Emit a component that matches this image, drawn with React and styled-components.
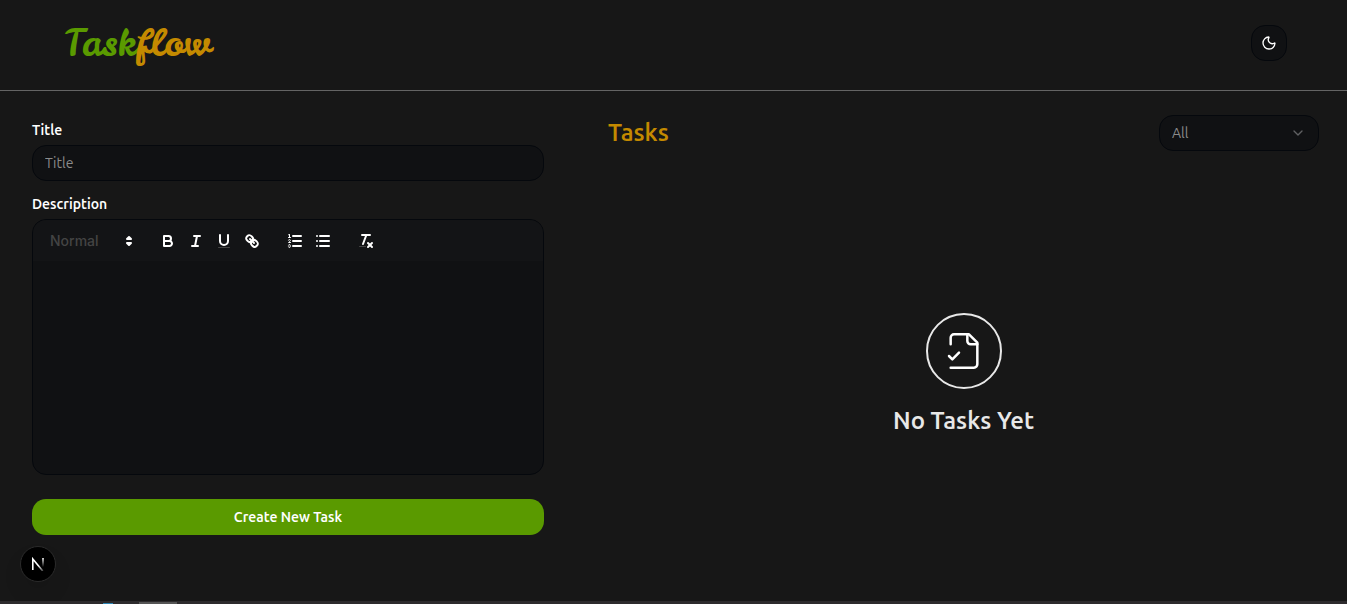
import React, { useState } from "react";
import styled, { createGlobalStyle, css } from "styled-components";
import { ChevronDown, Moon } from "lucide-react";

const uiFont = `"Ubuntu Sans", Ubuntu, "Noto Sans", sans-serif`;

const weight = {
  body: 450,
  strong: 560,
};

const GlobalStyle = createGlobalStyle`
  *, *::before, *::after { box-sizing: border-box; }
  body {
    margin: 0;
    background: #171717;
    color: #fff;
    font-family: ${uiFont};
    font-size: 14px;
    font-weight: ${weight.body};
    line-height: 20px;
  }
  button, input, select { font: inherit; color: inherit; }
`;

const Page = styled.div`
  display: flex;
  flex-direction: column;
  min-height: 100vh;
`;

const Header = styled.header`
  display: flex;
  align-items: center;
  justify-content: space-between;
  padding: 20px 60px 24px 64px;
  border-bottom: 1px solid #646464;
`;

const Logo = styled.a`
  font-family: "Leckerli One", Pacifico, "Liberation Serif", cursive;
  font-size: 36px;
  font-weight: 400;
  line-height: 46px;
  color: #5a9a00;
  text-decoration: none;
`;

const LogoAccent = styled.span`
  color: #c48a00;
`;

const surface = css`
  background: #101113;
  border: 1px solid #05080d;
  border-radius: 14px;
`;

const ThemeButton = styled.button`
  ${surface}
  display: grid;
  place-items: center;
  width: 36px;
  height: 36px;
  padding: 0;
`;

const Main = styled.main`
  flex: 1;
  display: grid;
  grid-template-columns: minmax(320px, 576px) minmax(0, 1fr);
`;

const TaskForm = styled.form`
  display: flex;
  flex-direction: column;
  padding: 32px;
`;

const Field = styled.div`
  display: flex;
  flex-direction: column;
  gap: 6px;
  margin-bottom: 16px;
`;

const Label = styled.label`
  font-weight: ${weight.strong};
  line-height: 16px;
`;

const TextInput = styled.input`
  ${surface}
  width: 100%;
  height: 36px;
  padding: 0 12px;
  &::placeholder { color: #8b8b8b; opacity: 1; }
`;

const Editor = styled.div`
  ${surface}
  overflow: hidden;
`;

const Toolbar = styled.div`
  display: flex;
  align-items: center;
  gap: 15px;
  padding: 8px;
  background: #131416;
  height: 41px;
`;

const ToolGroup = styled.div`
  display: flex;
  align-items: center;
`;

const FormatPicker = styled.div`
  position: relative;
  width: 98px;
`;

const FormatSelect = styled.select`
  appearance: none;
  width: 100%;
  height: 24px;
  padding: 0 8px 0 9px;
  border: 0;
  background: transparent;
  color: #444;
  font-family: Inter, "Liberation Sans", sans-serif;
  font-weight: 500;
`;

const PickerArrows = styled.svg`
  position: absolute;
  top: 3px;
  right: 1px;
  width: 18px;
  height: 18px;
  pointer-events: none;
`;

const ToolButton = styled.button`
  width: 28px;
  height: 24px;
  padding: 3px 5px;
  border: 0;
  background: none;
`;

const ToolIcon = styled.svg`
  display: block;
  width: 18px;
  height: 18px;
  fill: none;
  stroke: #fff;
  stroke-width: 2;
  stroke-linecap: round;
  stroke-linejoin: round;
  .solid { fill: #fff; stroke: none; }
  .thin { stroke-width: 1; }
  .rule { fill: #444; stroke: none; }
`;

const EditorBody = styled.div`
  min-height: 213px;
  outline: none;
`;

const SubmitButton = styled.button`
  height: 36px;
  margin-top: 8px;
  padding: 2px 16px 0;
  border: 0;
  border-radius: 14px;
  background: #5a9a00;
  font-weight: ${weight.strong};
`;

const TaskPanel = styled.section`
  display: flex;
  flex-direction: column;
  padding: 24px 28px 24px 32px;
`;

const PanelHeader = styled.div`
  display: flex;
  align-items: center;
  justify-content: space-between;
`;

const PanelTitle = styled.h1`
  margin: 0;
  font-size: 24px;
  line-height: 32px;
  font-weight: ${weight.strong};
  color: #c48a00;
`;

const FilterBox = styled.div`
  position: relative;
  width: 160px;
`;

const FilterSelect = styled.select`
  ${surface}
  appearance: none;
  width: 100%;
  height: 36px;
  padding: 2px 32px 0 12px;
  color: #8b8b8b;
`;

const FilterChevron = styled(ChevronDown)`
  position: absolute;
  top: 10px;
  right: 13px;
  color: #606163;
  pointer-events: none;
`;

const EmptyState = styled.div`
  display: flex;
  flex-direction: column;
  align-items: center;
  gap: 16px;
  padding-top: 162px;
  color: #e8e8e8;
`;

const EmptyBadge = styled.div`
  display: grid;
  place-items: center;
  width: 76px;
  height: 76px;
  border: 2px solid currentColor;
  border-radius: 50%;
`;

const EmptyTitle = styled.h2`
  margin: 0;
  font-size: 24px;
  line-height: 32px;
  font-weight: ${weight.strong};
`;

const DevBadge = styled.button`
  position: fixed;
  left: 20px;
  bottom: 22px;
  width: 36px;
  height: 36px;
  padding: 0;
  display: grid;
  place-items: center;
  border: 1px solid #2b2b2b;
  border-radius: 50%;
  background: #000;
  box-shadow: 0 12px 20px rgba(0, 0, 0, 0.08);
`;

const Dock = styled.div`
  position: fixed;
  inset: auto 0 0 0;
  display: flex;
  align-items: flex-end;
  gap: 26px;
  height: 3px;
  padding-left: 103px;
  background: #2d2b2d;
`;

const DockDot = styled.span`
  width: 10px;
  height: 1px;
  background: #2d86b5;
`;

const DockItem = styled.span`
  width: 38px;
  height: 2px;
  background: #555;
`;

const tools = {
  Bold: (
    <>
      <path d="M5,4H9.5A2.5,2.5,0,0,1,12,6.5v0A2.5,2.5,0,0,1,9.5,9H5A0,0,0,0,1,5,9V4A0,0,0,0,1,5,4Z" />
      <path d="M5,9h5.5A2.5,2.5,0,0,1,13,11.5v0A2.5,2.5,0,0,1,10.5,14H5a0,0,0,0,1,0,0V9A0,0,0,0,1,5,9Z" />
    </>
  ),
  Italic: (
    <>
      <line x1="7" x2="13" y1="4" y2="4" />
      <line x1="5" x2="11" y1="14" y2="14" />
      <line x1="8" x2="10" y1="14" y2="4" />
    </>
  ),
  Underline: (
    <>
      <path d="M5,3V9a4.012,4.012,0,0,0,4,4H9a4.012,4.012,0,0,0,4-4V3" />
      <rect className="rule" height="1" rx="0.5" ry="0.5" width="12" x="3" y="15" />
    </>
  ),
  Link: (
    <>
      <line x1="7" x2="11" y1="7" y2="11" />
      <path d="M8.9,4.577a3.476,3.476,0,0,1,.36,4.679A3.476,3.476,0,0,1,4.577,8.9C3.185,7.5,2.035,6.4,4.217,4.217S7.5,3.185,8.9,4.577Z" />
      <path d="M13.423,9.1a3.476,3.476,0,0,0-4.679-.36,3.476,3.476,0,0,0,.36,4.679c1.392,1.392,2.5,2.542,4.679.36S14.815,10.5,13.423,9.1Z" />
    </>
  ),
  "Numbered list": (
    <>
      <line x1="7" x2="15" y1="4" y2="4" />
      <line x1="7" x2="15" y1="9" y2="9" />
      <line x1="7" x2="15" y1="14" y2="14" />
      <line className="thin" x1="2.5" x2="4.5" y1="5.5" y2="5.5" />
      <path className="solid" d="M3.5,6A0.5,0.5,0,0,1,3,5.5V3.085l-0.276.138A0.5,0.5,0,0,1,2.053,3c-0.124-.247-0.023-0.324.224-0.447l1-.5A0.5,0.5,0,0,1,4,2.5v3A0.5,0.5,0,0,1,3.5,6Z" />
      <path className="thin" d="M4.5,10.5h-2c0-.234,1.85-1.076,1.85-2.234A0.959,0.959,0,0,0,2.5,8.156" />
      <path className="thin" d="M2.5,14.846a0.959,0.959,0,0,0,1.85-.109A0.7,0.7,0,0,0,3.75,14a0.688,0.688,0,0,0,.6-0.736,0.959,0.959,0,0,0-1.85-.109" />
    </>
  ),
  "Bulleted list": (
    <>
      <line x1="6" x2="15" y1="4" y2="4" />
      <line x1="6" x2="15" y1="9" y2="9" />
      <line x1="6" x2="15" y1="14" y2="14" />
      <line x1="3" x2="3" y1="4" y2="4" />
      <line x1="3" x2="3" y1="9" y2="9" />
      <line x1="3" x2="3" y1="14" y2="14" />
    </>
  ),
  "Clear formatting": (
    <>
      <line x1="5" x2="13" y1="3" y2="3" />
      <line x1="6" x2="9.35" y1="12" y2="3" />
      <line x1="11" x2="15" y1="11" y2="15" />
      <line x1="15" x2="11" y1="11" y2="15" />
      <rect className="rule" height="1" rx="0.5" ry="0.5" width="7" x="2" y="14" />
    </>
  ),
};

const groups = [
  ["Bold", "Italic", "Underline", "Link"],
  ["Numbered list", "Bulleted list"],
  ["Clear formatting"],
];

function EditorToolbar() {
  return (
    <Toolbar role="toolbar" aria-label="Formatting">
      <FormatPicker>
        <FormatSelect aria-label="Text style" defaultValue="Normal">
          <option>Normal</option>
          <option>Heading</option>
        </FormatSelect>
        <PickerArrows viewBox="0 0 18 18" fill="#fff" stroke="#fff" strokeWidth="2" strokeLinejoin="round" aria-hidden="true">
          <polygon points="7 11 9 13 11 11 7 11" />
          <polygon points="7 7 9 5 11 7 7 7" />
        </PickerArrows>
      </FormatPicker>
      {groups.map((group) => (
        <ToolGroup key={group[0]}>
          {group.map((name) => (
            <ToolButton key={name} type="button" aria-label={name}>
              <ToolIcon viewBox="0 0 18 18" aria-hidden="true">{tools[name]}</ToolIcon>
            </ToolButton>
          ))}
        </ToolGroup>
      ))}
    </Toolbar>
  );
}

export default function App() {
  const [title, setTitle] = useState("");
  return (
    <Page>
      <GlobalStyle />
      <Header>
        <Logo href="#">Task<LogoAccent>flow</LogoAccent></Logo>
        <ThemeButton type="button" aria-label="Toggle theme">
          <Moon size={16} strokeWidth={2} />
        </ThemeButton>
      </Header>
      <Main>
        <TaskForm onSubmit={(e) => e.preventDefault()}>
          <Field>
            <Label htmlFor="title">Title</Label>
            <TextInput id="title" placeholder="Title" value={title} onChange={(e) => setTitle(e.target.value)} />
          </Field>
          <Field>
            <Label as="span" id="description-label">Description</Label>
            <Editor>
              <EditorToolbar />
              <EditorBody contentEditable suppressContentEditableWarning role="textbox" aria-multiline="true" aria-labelledby="description-label" />
            </Editor>
          </Field>
          <SubmitButton type="submit">Create New Task</SubmitButton>
        </TaskForm>
        <TaskPanel>
          <PanelHeader>
            <PanelTitle>Tasks</PanelTitle>
            <FilterBox>
              <FilterSelect aria-label="Filter tasks" defaultValue="All">
                <option>All</option>
                <option>Completed</option>
                <option>Pending</option>
              </FilterSelect>
              <FilterChevron size={16} />
            </FilterBox>
          </PanelHeader>
          <EmptyState>
            <EmptyBadge>
              <svg width="40" height="40" viewBox="0 0 24 24" fill="none" stroke="#fff" strokeWidth="1.5" strokeLinecap="round" strokeLinejoin="round" aria-hidden="true">
                <path d="M4 8V4a2 2 0 0 1 2-2h9l5 5v13a2 2 0 0 1-2 2H4" />
                <path d="M14 2v4a2 2 0 0 0 2 2h4" />
                <path d="m3 15 2 2 4-4" />
              </svg>
            </EmptyBadge>
            <EmptyTitle>No Tasks Yet</EmptyTitle>
          </EmptyState>
        </TaskPanel>
      </Main>
      <DevBadge type="button" aria-label="Open developer tools">
        <svg width="14" height="14" viewBox="0 0 14 14" fill="none" strokeWidth="1.6" aria-hidden="true">
          <defs>
            <linearGradient id="stem" x1="0" y1="1" x2="0" y2="10" gradientUnits="userSpaceOnUse">
              <stop stopColor="#fff" />
              <stop offset="1" stopColor="#fff" stopOpacity="0" />
            </linearGradient>
            <linearGradient id="diagonal" x1="8" y1="8" x2="13" y2="14" gradientUnits="userSpaceOnUse">
              <stop stopColor="#fff" />
              <stop offset="1" stopColor="#fff" stopOpacity="0.2" />
            </linearGradient>
          </defs>
          <path d="M1.8 13V2l10 12" stroke="url(#diagonal)" />
          <path d="M12 1v9" stroke="url(#stem)" />
        </svg>
      </DevBadge>
      <Dock aria-hidden="true">
        <DockDot />
        <DockItem />
      </Dock>
    </Page>
  );
}
